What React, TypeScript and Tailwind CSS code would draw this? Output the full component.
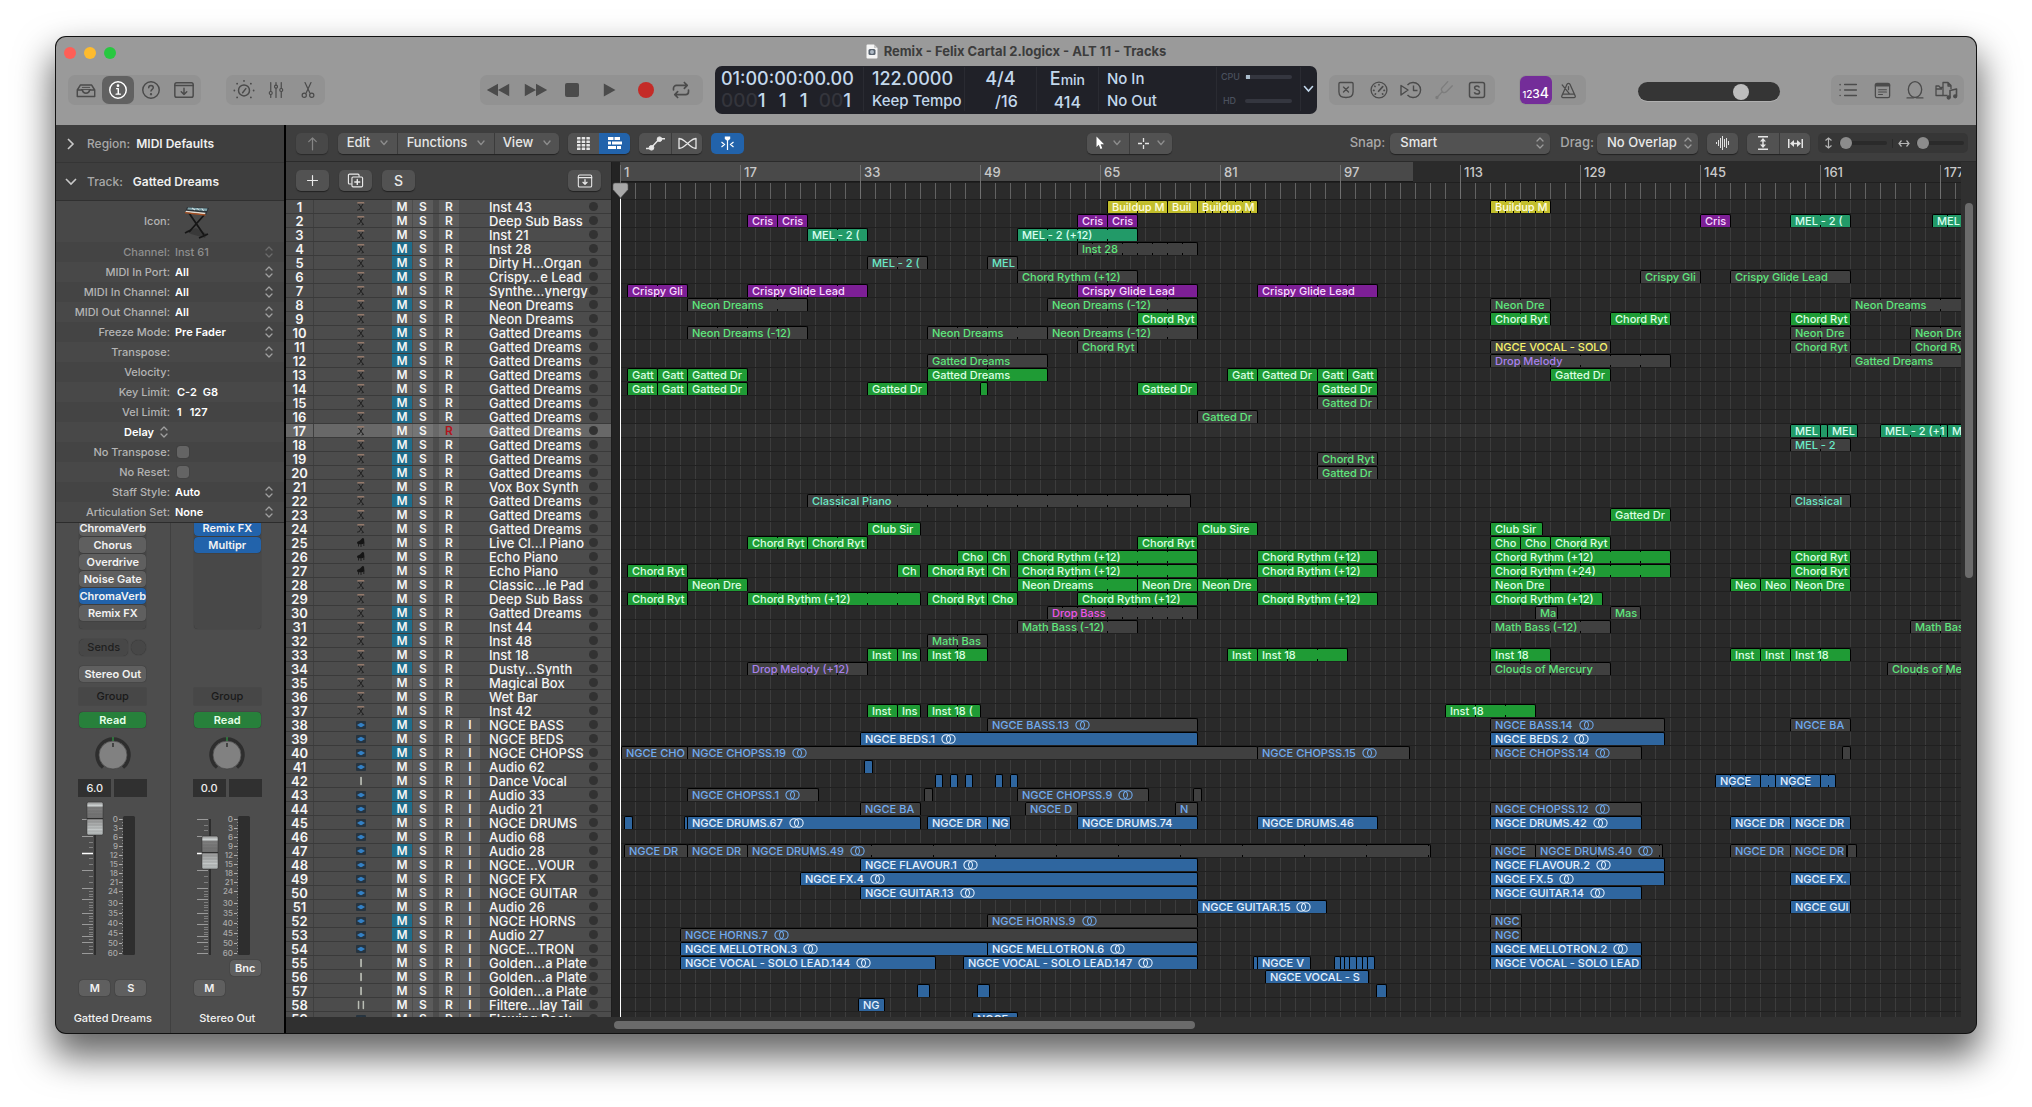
import React from "react";

type Kind = "keys" | "piano" | "wave" | "mic" | "mics";
type Tone = "green" | "purple" | "teal" | "yellow" | "blue" | "mGreen" | "mTeal" | "mPurple" | "mMagenta" | "mYellow" | "mBlue";
// start bar, end bar, label, tone, loop length in bars (0 = none), stereo mark
type Clip = [number, number, string, Tone, number?, boolean?];

const PX_PER_BAR = 7.5;

const TONES: Record<Tone, string> = {
  green: "bg-[#1f9b35] text-[#dcffe2]",
  purple: "bg-[#7d1f96] text-[#f9dcff]",
  teal: "bg-[#229a68] text-[#d9fff0]",
  yellow: "bg-[#c2be2c] text-[#fffde0]",
  blue: "bg-[#2f669f] text-[#e4f1ff]",
  mGreen: "bg-[#404040] text-[#5fe87d]",
  mTeal: "bg-[#404040] text-[#6beac8]",
  mPurple: "bg-[#404040] text-[#a881ee]",
  mMagenta: "bg-[#404040] text-[#ee55e8]",
  mYellow: "bg-[#404040] text-[#f8f36b]",
  mBlue: "bg-[#404040] text-[#70abf0]",
};

const NAMES = [
  "Inst 43", "Deep Sub Bass", "Inst 21", "Inst 28", "Dirty H…Organ", "Crispy…e Lead", "Synthe…ynergy",
  "Neon Dreams", "Neon Dreams", "Gatted Dreams", "Gatted Dreams", "Gatted Dreams", "Gatted Dreams",
  "Gatted Dreams", "Gatted Dreams", "Gatted Dreams", "Gatted Dreams", "Gatted Dreams", "Gatted Dreams",
  "Gatted Dreams", "Vox Box Synth", "Gatted Dreams", "Gatted Dreams", "Gatted Dreams", "Live Cl…l Piano",
  "Echo Piano", "Echo Piano", "Classic…le Pad", "Deep Sub Bass", "Gatted Dreams", "Inst 44", "Inst 48",
  "Inst 18", "Dusty…Synth", "Magical Box", "Wet Bar", "Inst 42", "NGCE BASS", "NGCE BEDS", "NGCE CHOPSS",
  "Audio 62", "Dance Vocal", "Audio 33", "Audio 21", "NGCE DRUMS", "Audio 68", "Audio 28", "NGCE…VOUR",
  "NGCE FX", "NGCE GUITAR", "Audio 26", "NGCE HORNS", "Audio 27", "NGCE…TRON", "Golden…a Plate",
  "Golden…a Plate", "Golden…a Plate", "Filtere…lay Tail", "Flowing Rock",
];
const MUTED = new Set([4, 5, 6, 8, 10, 11, 12, 15, 16, 18, 19, 20, 22, 30, 31, 32, 34, 38, 40, 43, 44, 47, 52, 53]);
const SELECTED = 17;

function kindOf(n: number): Kind {
  if (n >= 25 && n <= 27) return "piano";
  if (n < 38) return "keys";
  if (n === 42 || (n >= 55 && n <= 57)) return "mic";
  if (n === 58) return "mics";
  return "wave";
}

const R12 = "Chord Rythm (+12)";
const CLIPS: Record<number, Clip[]> = {
  1: [[65, 73, "Buildup M", "yellow", 4], [73, 77, "Buil", "yellow"], [77, 85, "Buildup M", "yellow", 1], [116, 124, "Buildup M", "yellow", 1]],
  2: [[17, 21, "Cris", "purple"], [21, 25, "Cris", "purple"], [61, 65, "Cris", "purple"], [65, 69, "Cris", "purple"], [144, 148, "Cris", "purple"], [156, 164, "MEL - 2 (", "teal", 4], [175, 183, "MEL", "teal", 2]],
  3: [[25, 33, "MEL - 2 (", "teal", 4], [53, 69, "MEL - 2 (+12)", "teal", 4]],
  4: [[61, 77, "Inst 28", "mGreen", 2]],
  5: [[33, 41, "MEL - 2 (", "mTeal", 4], [49, 53, "MEL", "mTeal"]],
  6: [[53, 69, R12, "mGreen", 4], [136, 144, "Crispy Gli", "mGreen", 4], [148, 164, "Crispy Glide Lead", "mGreen", 4]],
  7: [[1, 9, "Crispy Gli", "purple", 4], [17, 33, "Crispy Glide Lead", "purple", 4], [61, 77, "Crispy Glide Lead", "purple", 4], [85, 101, "Crispy Glide Lead", "purple", 4]],
  8: [[9, 25, "Neon Dreams", "mGreen", 4], [57, 77, "Neon Dreams (-12)", "mGreen", 4], [116, 124, "Neon Dre", "mGreen", 4], [164, 182, "Neon Dreams", "mGreen", 4]],
  9: [[69, 77, "Chord Ryt", "green", 4], [116, 124, "Chord Ryt", "green", 4], [132, 140, "Chord Ryt", "green", 4], [156, 164, "Chord Ryt", "green", 4]],
  10: [[9, 25, "Neon Dreams (-12)", "mGreen", 4], [41, 57, "Neon Dreams", "mGreen", 4], [57, 77, "Neon Dreams (-12)", "mGreen", 4], [156, 164, "Neon Dre", "mGreen", 4], [172, 182, "Neon Dre", "mGreen", 4]],
  11: [[61, 69, "Chord Ryt", "mGreen", 4], [116, 132, "NGCE VOCAL - SOLO", "mYellow"], [156, 164, "Chord Ryt", "mGreen", 4], [172, 182, "Chord Ryt", "mGreen", 4]],
  12: [[41, 57, "Gatted Dreams", "mGreen", 8], [116, 140, "Drop Melody", "mPurple", 4], [164, 182, "Gatted Dreams", "mGreen", 8]],
  13: [[1, 5, "Gatt", "green"], [5, 9, "Gatt", "green"], [9, 17, "Gatted Dr", "green"], [41, 57, "Gatted Dreams", "green", 8], [81, 85, "Gatt", "green"], [85, 93, "Gatted Dr", "green"], [93, 97, "Gatt", "green"], [97, 101, "Gatt", "green"], [124, 132, "Gatted Dr", "green"]],
  14: [[1, 5, "Gatt", "green"], [5, 9, "Gatt", "green"], [9, 17, "Gatted Dr", "green"], [33, 41, "Gatted Dr", "green"], [48, 49, "", "green"], [69, 77, "Gatted Dr", "green"], [93, 101, "Gatted Dr", "green"]],
  15: [[93, 101, "Gatted Dr", "mGreen"]],
  16: [[77, 85, "Gatted Dr", "mGreen"]],
  17: [[156, 160, "MEL", "teal"], [160, 161, "", "teal"], [161, 165, "MEL", "teal"], [168, 177, "MEL - 2 (+1", "teal", 4], [177, 182, "M", "teal"]],
  18: [[156, 164, "MEL - 2", "mTeal", 4]],
  19: [[93, 101, "Chord Ryt", "mGreen", 4]],
  20: [[93, 101, "Gatted Dr", "mGreen"]],
  22: [[25, 76, "Classical Piano", "mTeal", 4], [156, 164, "Classical", "mTeal", 4]],
  23: [[132, 140, "Gatted Dr", "green"]],
  24: [[33, 40, "Club Sir", "green"], [77, 85, "Club Sire", "green"], [116, 123, "Club Sir", "green"]],
  25: [[17, 25, "Chord Ryt", "green", 4], [25, 33, "Chord Ryt", "green", 4], [69, 77, "Chord Ryt", "green", 4], [116, 120, "Cho", "green"], [120, 124, "Cho", "green"], [124, 132, "Chord Ryt", "green", 4]],
  26: [[45, 49, "Cho", "green"], [49, 52, "Ch", "green"], [53, 77, R12, "green", 4], [85, 101, R12, "green", 4], [116, 140, R12, "green", 4], [156, 164, "Chord Ryt", "green", 4]],
  27: [[1, 9, "Chord Ryt", "green", 4], [37, 40, "Ch", "green"], [41, 49, "Chord Ryt", "green", 4], [49, 52, "Ch", "green"], [53, 77, R12, "green", 4], [85, 101, R12, "green", 4], [116, 140, "Chord Rythm (+24)", "green", 4], [156, 164, "Chord Ryt", "green", 4]],
  28: [[9, 17, "Neon Dre", "green", 4], [53, 69, "Neon Dreams", "green", 4], [69, 77, "Neon Dre", "green", 4], [77, 85, "Neon Dre", "green", 4], [116, 124, "Neon Dre", "green", 4], [148, 152, "Neo", "green"], [152, 156, "Neo", "green"], [156, 164, "Neon Dre", "green", 4]],
  29: [[1, 9, "Chord Ryt", "green", 4], [17, 40, R12, "green", 4], [41, 49, "Chord Ryt", "green", 4], [49, 53, "Cho", "green"], [61, 77, R12, "green", 4], [85, 101, R12, "green", 4], [116, 131, R12, "green", 4]],
  30: [[57, 77, "Drop Bass", "mMagenta", 2], [122, 125, "Ma", "mGreen"], [132, 136, "Mas", "mGreen"]],
  31: [[53, 69, "Math Bass (-12)", "mGreen", 4], [116, 132, "Math Bass (-12)", "mGreen", 4], [172, 182, "Math Bas", "mGreen", 4]],
  32: [[41, 49, "Math Bas", "mGreen", 4]],
  33: [[33, 37, "Inst", "green"], [37, 40, "Ins", "green"], [41, 49, "Inst 18", "green", 4], [81, 85, "Inst", "green"], [85, 97, "Inst 18", "green", 4], [116, 124, "Inst 18", "green", 4], [148, 152, "Inst", "green"], [152, 156, "Inst", "green"], [156, 164, "Inst 18", "green", 4]],
  34: [[17, 33, "Drop Melody (+12)", "mPurple", 4], [116, 132, "Clouds of Mercury", "mGreen", 4], [169, 185, "Clouds of Mercury", "mGreen", 4]],
  37: [[33, 37, "Inst", "green"], [37, 40, "Ins", "green"], [41, 48, "Inst 18 (", "green", 4], [110, 122, "Inst 18", "green", 4]],
  38: [[49, 77, "NGCE BASS.13", "mBlue", 0, true], [116, 139.3, "NGCE BASS.14", "mBlue", 0, true], [156, 164, "NGCE BA", "mBlue"]],
  39: [[32, 77, "NGCE BEDS.1", "blue", 0, true], [116, 139.3, "NGCE BEDS.2", "blue", 0, true]],
  40: [[0.2, 9, "NGCE CHO", "mBlue"], [9, 85, "NGCE CHOPSS.19", "mBlue", 0, true], [85, 105.3, "NGCE CHOPSS.15", "mBlue", 0, true], [116, 136.2, "NGCE CHOPSS.14", "mBlue", 0, true], [163, 164, "", "mBlue"]],
  41: [[32.6, 33.6, "", "blue"]],
  42: [[42, 43, "", "blue"], [44, 45, "", "blue"], [46, 47, "", "blue"], [50, 51, "", "blue"], [52, 53, "", "blue"], [146, 152, "NGCE", "blue", 2], [152, 154, "", "blue", 1], [154, 160, "NGCE", "blue", 2], [160, 162, "", "blue", 1]],
  43: [[9, 26.5, "NGCE CHOPSS.1", "mBlue", 0, true], [40.6, 41.6, "", "mBlue"], [53, 70.5, "NGCE CHOPSS.9", "mBlue", 0, true], [76.5, 77.5, "", "mBlue"]],
  44: [[32, 40, "NGCE BA", "mBlue"], [54, 61, "NGCE D", "mBlue"], [74, 77, "N", "mBlue"], [116, 136.2, "NGCE CHOPSS.12", "mBlue", 0, true]],
  45: [[0.6, 1.6, "", "blue"], [8.6, 9, "", "blue"], [9, 40, "NGCE DRUMS.67", "blue", 0, true], [41, 49, "NGCE DR", "blue"], [49, 52, "NG", "blue"], [61, 77, "NGCE DRUMS.74", "blue"], [85, 101, "NGCE DRUMS.46", "blue"], [116, 136.2, "NGCE DRUMS.42", "blue", 0, true], [148, 156, "NGCE DR", "blue"], [156, 164, "NGCE DR", "blue"]],
  47: [[0.6, 9, "NGCE DR", "mBlue"], [9, 17, "NGCE DR", "mBlue"], [17, 108, "NGCE DRUMS.49", "mBlue", 8.25, true], [116, 122, "NGCE", "mBlue"], [122, 139, "NGCE DRUMS.40", "mBlue", 8.25, true], [148, 156, "NGCE DR", "mBlue"], [156, 163.5, "NGCE DR", "mBlue"], [163.7, 164.8, "", "mBlue"]],
  48: [[32, 77, "NGCE FLAVOUR.1", "blue", 0, true], [116, 139.3, "NGCE FLAVOUR.2", "blue", 0, true]],
  49: [[24, 77, "NGCE FX.4", "blue", 0, true], [116, 139.3, "NGCE FX.5", "blue", 0, true], [156, 164, "NGCE FX.", "blue"]],
  50: [[32, 77, "NGCE GUITAR.13", "blue", 0, true], [116, 136.2, "NGCE GUITAR.14", "blue", 0, true]],
  51: [[77, 94.2, "NGCE GUITAR.15", "blue", 0, true], [156, 164, "NGCE GUI", "blue"]],
  52: [[49, 77, "NGCE HORNS.9", "mBlue", 0, true], [116, 120.2, "NGC", "mBlue"]],
  53: [[8, 77, "NGCE HORNS.7", "mBlue", 0, true], [116, 120.2, "NGC", "mBlue"]],
  54: [[8, 49, "NGCE MELLOTRON.3", "blue", 0, true], [49, 77, "NGCE MELLOTRON.6", "blue", 0, true], [116, 136.2, "NGCE MELLOTRON.2", "blue", 0, true]],
  55: [[8, 42, "NGCE VOCAL - SOLO LEAD.144", "blue", 0, true], [45.8, 77, "NGCE VOCAL - SOLO LEAD.147", "blue", 0, true], [84.4, 85, "", "blue"], [85, 92, "NGCE V", "blue"], [95.3, 96, "", "blue"], [96, 96.6, "", "blue"], [96.6, 97.3, "", "blue"], [97.3, 98.2, "", "blue"], [98.2, 99, "", "blue"], [99, 99.6, "", "blue"], [99.6, 100.6, "", "blue"], [116, 136.2, "NGCE VOCAL - SOLO LEAD", "blue"]],
  56: [[86, 99.8, "NGCE VOCAL - S", "blue"]],
  57: [[39.7, 41.3, "", "blue"], [47.7, 49.3, "", "blue"], [100.8, 102.2, "", "blue"]],
  58: [[31.8, 35.2, "NG", "blue"]],
  59: [[47, 53, "NGCE", "blue"]],
};

/* ---------- small drawings ---------- */

function Icon({ children, size = 22, sw = 1.6, className = "" }: { children: React.ReactNode; size?: number; sw?: number; className?: string }) {
  return (
    <svg width={size} height={size} viewBox="0 0 24 24" fill="none" stroke="currentColor" strokeWidth={sw} strokeLinecap="round" strokeLinejoin="round" className={className} aria-hidden="true">
      {children}
    </svg>
  );
}

function Steppers({ className = "" }: { className?: string }) {
  return (
    <svg width="8" height="12" viewBox="0 0 8 12" fill="none" stroke="currentColor" strokeWidth="1.3" strokeLinecap="round" strokeLinejoin="round" className={className} aria-hidden="true">
      <path d="M1 4 4 1l3 3M1 8l3 3 3-3" />
    </svg>
  );
}

function Chevron({ className = "" }: { className?: string }) {
  return (
    <svg width="8" height="6" viewBox="0 0 8 6" fill="none" stroke="currentColor" strokeWidth="1.4" strokeLinecap="round" strokeLinejoin="round" className={className} aria-hidden="true">
      <path d="M1 1l3 3.6L7 1" />
    </svg>
  );
}

function StereoMark() {
  return (
    <svg width="15" height="10" viewBox="0 0 15 10" fill="none" stroke="currentColor" strokeWidth="1.1" className="shrink-0" aria-hidden="true">
      <circle cx="5.2" cy="5" r="4.3" />
      <circle cx="9.8" cy="5" r="4.3" />
    </svg>
  );
}

function TrackIcon({ kind }: { kind: Kind }) {
  if (kind === "keys")
    return (
      <svg width="10" height="11" viewBox="0 0 10 11" aria-hidden="true">
        <path d="M1.500 1h6.500l.6 1.600h-7.500z" fill="#94796a" />
        <path d="M2.500 3l4.500 6M7 3L3 9" stroke="#1f1f1f" strokeWidth="1" />
        <path d="M1 9.200l2.500-.6M5.500 10l2.500-.8" stroke="#262626" strokeWidth="1" />
      </svg>
    );
  if (kind === "piano")
    return (
      <svg width="10" height="11" viewBox="0 0 10 11" aria-hidden="true">
        <path d="M1 5l3-1.500L6.500 1 8 1.500 8.500 6.500 5 7.500 1.500 7z" fill="#151515" />
        <path d="M2.500 7v2.500M5 7.500V10M7.800 6.500V9" stroke="#1a1a1a" strokeWidth="0.900" />
      </svg>
    );
  if (kind === "wave")
    return (
      <svg width="10" height="8" viewBox="0 0 10 8" aria-hidden="true">
        <rect width="10" height="8" rx="1" fill="#27343f" />
        <path d="M1 4L3 2.800 5 1.800 7 2.800 9 4 7 5.200 5 6.200 3 5.200z" fill="#3480c4" />
      </svg>
    );
  return (
    <svg width="10" height="10" viewBox="0 0 10 10" aria-hidden="true">
      {kind === "mic" ? (
        <rect x="4.200" y="0.800" width="1.700" height="8.400" rx="0.800" fill="#b9bdb4" />
      ) : (
        <>
          <rect x="1.800" y="0.800" width="1.500" height="8.400" rx="0.700" fill="#b9bdb4" />
          <rect x="6.600" y="0.800" width="1.500" height="8.400" rx="0.700" fill="#b9bdb4" />
        </>
      )}
    </svg>
  );
}

/* ---------- toolbar ---------- */

function ToolGroup({ children }: { children: React.ReactNode }) {
  return <div className="flex h-[30px] items-center rounded-[7px] bg-[#929292] px-px">{children}</div>;
}

function Tool({ label, w = "w-[33px]", tone = "text-[#4b4b4b]", children }: { label: string; w?: string; tone?: string; children: React.ReactNode }) {
  return (
    <button type="button" aria-label={label} className={`flex h-7 shrink-0 items-center justify-center rounded-[7px] ${w} ${tone}`}>
      {children}
    </button>
  );
}

function Lcd() {
  const dim = "text-[#34353c]";
  return (
    <div className="flex h-12 w-[602px] shrink-0 rounded-[7px] bg-[#202128] pt-px pb-[3px] font-medium text-[#c3d8ec]">
      <div className="flex w-[148px] flex-col pl-1.5 whitespace-nowrap">
        <div className="text-[18px] leading-[23px]">01:00:00:00.00</div>
        <div className="flex text-[19px] leading-[22px]">
          <span className={dim}>000</span><span className="w-[21px]">1</span><span className="w-[21px]">1</span><span className="w-[19px]">1</span><span className={dim}>00</span><span>1</span>
        </div>
      </div>
      <div className="w-[101px] border-l border-[#2a2b32] pl-2 whitespace-nowrap">
        <div className="text-[18px] leading-[23px]">122.0000</div>
        <div className="text-[15px] leading-[22px]">Keep Tempo</div>
      </div>
      <div className="w-[72px] border-l border-[#2a2b32] text-center">
        <div className="text-[18px] leading-[23px]">4/4</div>
        <div className="pl-3 text-[16px] leading-[22px]">/16</div>
      </div>
      <div className="w-[62px] border-l border-[#2a2b32] text-center">
        <div className="text-[18px] leading-[23px]">E<span className="text-[14px]">min</span></div>
        <div className="text-[16px] leading-[22px]">414</div>
      </div>
      <div className="w-[118px] border-l border-[#2a2b32] pl-2 text-[15px]">
        <div className="leading-[23px]">No In</div>
        <div className="leading-[22px]">No Out</div>
      </div>
      <div className="flex w-[84px] flex-col gap-2 border-l border-[#2a2b32] pt-0.5 pl-1 text-[9px] text-[#4b515e]">
        <div className="flex h-4 items-center">
          <span className="w-6">CPU</span>
          <span className="flex h-1 w-[47px] rounded-full bg-[#34363f] pl-px"><span className="w-1 bg-[#a9bccc]" /></span>
        </div>
        <div className="flex h-4 items-center">
          <span className="w-[21px] pl-0.5">HD</span>
          <span className="ml-[3px] h-1 w-[47px] rounded-full bg-[#34363f]" />
        </div>
      </div>
      <button type="button" aria-label="Display mode" className="flex flex-1 items-center justify-center border-l border-[#2a2b32]">
        <svg width="11" height="8" viewBox="0 0 11 8" fill="none" stroke="currentColor" strokeWidth="1.600" strokeLinecap="round"><path d="M1.500 1.500l4 4.500 4-4.500" /></svg>
      </button>
    </div>
  );
}

function Toolbar() {
  return (
    <header className="bg-[#9a9a9a]">
      <div className="grid h-[29px] grid-cols-[1fr_auto_1fr] items-center">
        <div className="flex gap-2 pt-0.5 pl-2">
          <button type="button" aria-label="Close" className="size-3 rounded-full bg-[#fe5f57]" />
          <button type="button" aria-label="Minimize" className="size-3 rounded-full bg-[#febb2e]" />
          <button type="button" aria-label="Zoom" className="size-3 rounded-full bg-[#28c840]" />
        </div>
        <h1 className="flex items-center gap-1.5 text-[13px] font-bold text-[#3c3c3c]">
          <svg width="12" height="15" viewBox="0 0 12 15" aria-hidden="true">
            <path d="M0.500 1.500a1 1 0 011-1H8l3.500 3.500v9.500a1 1 0 01-1 1h-9a1 1 0 01-1-1z" fill="#f5f5f5" />
            <path d="M8 0.500V4h3.500z" fill="#c9c9c9" />
            <rect x="2.500" y="5" width="7" height="6" rx="1.500" fill="#59636f" />
            <circle cx="6" cy="8" r="2" fill="#aeb9c4" />
          </svg>
          Remix - Felix Cartal 2.logicx - ALT 11 - Tracks
        </h1>
      </div>
      <div className="flex h-[59px] items-start">
        <div className="mt-[9px] ml-3"><ToolGroup>
          <Tool label="Library">
            <Icon><path d="M2.500 12l3.500-5.500h12L21.500 12v7h-19zM2.500 12H8c.5 2.500 2 3.500 4 3.500s3.500-1 4-3.500h5.500" /><path d="M8 9.200h8M7 11.500h10" strokeWidth="1" /></Icon>
          </Tool>
          <Tool label="Inspector" w="w-8" tone="bg-[#616161] text-white">
            <Icon><circle cx="12" cy="12" r="9" /><path d="M10.500 10.500H12.300V16.500M10 16.500h4.500" /><circle cx="12" cy="7.300" r="0.700" fill="currentColor" /></Icon>
          </Tool>
          <Tool label="Quick Help">
            <Icon><circle cx="12" cy="12" r="9" /><path d="M9.500 9.500a2.500 2.500 0 115 0c0 1.700-2.500 1.900-2.500 3.700" /><circle cx="12" cy="16.500" r="0.500" fill="currentColor" /></Icon>
          </Tool>
          <Tool label="Toolbar">
            <Icon><rect x="2" y="4" width="20" height="16" rx="2" /><path d="M2 7h20M12 10v7M9 14l3 3 3-3" /></Icon>
          </Tool>
        </ToolGroup></div>
        <div className="mt-[9px] ml-[25px]"><ToolGroup>
          <Tool label="Smart Controls">
            <Icon size={22}><circle cx="12" cy="12.500" r="6" /><path d="M10.500 15l3.500-4.500" /><path d="M12 2v.1M4.500 5v.1M19.500 5v.1M1.500 12.500v.1M22.500 12.500v.1M4.500 20v.1M19.500 20v.1" strokeWidth="2" /></Icon>
          </Tool>
          <Tool label="Mixer" w="w-[31px]">
            <Icon size={18}><path d="M5 2v12M5 18v4M12 2v3.500M12 9.500V22M19 2v8M19 14v8" /><circle cx="5" cy="16" r="2" /><circle cx="12" cy="7.500" r="2" /><circle cx="19" cy="12" r="2" /></Icon>
          </Tool>
          <Tool label="Editors">
            <Icon size={18}><path d="M8 2l6.500 14M16 2L9.500 16" /><circle cx="7" cy="19" r="2.800" /><circle cx="17" cy="19" r="2.800" /></Icon>
          </Tool>
        </ToolGroup></div>
        <div className="flex-[156]" />
        <div className="mt-[9px]"><ToolGroup>
          <Tool label="Rewind" w="w-[34px]"><svg width="24" height="14" viewBox="0 0 24 14" fill="currentColor"><path d="M12 .8v12.400L.8 7zM23.200.8v12.400L12 7z" /></svg></Tool>
          <Tool label="Forward" w="w-[43px]"><svg width="24" height="14" viewBox="0 0 24 14" fill="currentColor"><path d="M12 .8v12.400L23.200 7zM.8.8v12.400L12 7z" /></svg></Tool>
          <Tool label="Stop" w="w-[29px]"><span className="size-3.5 rounded-[2px] bg-current" /></Tool>
          <Tool label="Play" w="w-[46px]"><svg width="13" height="14" viewBox="0 0 13 14" fill="currentColor"><path d="M.8.500v13L12.500 7z" /></svg></Tool>
          <Tool label="Record" w="w-[27px]" tone="text-[#c42b27]"><span className="size-4 rounded-full bg-current" /></Tool>
          <Tool label="Cycle" w="w-[42px]">
            <Icon size={20} sw={2}><path d="M3 12V10a3.500 3.500 0 013.500-3.500H19M16 3l3.500 3.500L16 10M21 12v2a3.500 3.500 0 01-3.500 3.500H5M8 14l-3.500 3.500L8 21" /></Icon>
          </Tool>
        </ToolGroup></div>
        <div className="ml-3"><Lcd /></div>
        <div className="mt-[9px] ml-3"><ToolGroup>
          <Tool label="Replace"><Icon size={20}><path d="M3.500 4.500a1.500 1.500 0 011.500-1.500h14a1.500 1.500 0 011.500 1.500V14c0 4-3 7-8.500 7s-8.500-3-8.500-7zM9 8.500l6 6M15 8.500l-6 6" /></Icon></Tool>
          <Tool label="Low Latency"><Icon size={20}><circle cx="12" cy="12" r="9.500" /><path d="M11.500 13.500L16.500 8" strokeWidth="2" /><path d="M12 5.500v.5M7 7.500l.3.300M5.500 12.500h.5M18 12.500h.5M7.500 17l.3-.3M16.500 17l-.3-.3" strokeWidth="2" /></Icon></Tool>
          <Tool label="Pre Fader Metering" w="w-[31px]"><svg width="22" height="18" viewBox="0 0 22 18" fill="none" stroke="currentColor" strokeWidth="1.400" strokeLinejoin="round"><path d="M1 4.500l7 4.500-7 5z" /><path d="M7.500 4A7.500 7.500 0 1 1 7.500 14" /><path d="M13.500 4.500V9.500h4" /></svg></Tool>
          <Tool label="Tuner" w="w-[34px]" tone="text-[#7d7d7d]"><Icon size={20}><circle cx="3.500" cy="21" r="1.200" fill="currentColor" /><path d="M3.500 21l6.500-7M10 14c-1.700-1.700-1-4 .5-5.500L16.500 2M10 14c1.700 1.700 4 1 5.500-.5L22 7" /></Icon></Tool>
          <Tool label="Solo"><svg width="18" height="18" viewBox="0 0 18 18" fill="none" stroke="currentColor" strokeWidth="1.500"><rect x="1.500" y="1.500" width="15" height="15" rx="2" /><path d="M11.400 6.500C11 5.500 10.200 5 9 5 7.600 5 6.600 5.800 6.600 6.900c0 2.600 5 1.400 5 4 0 1.200-1 2.100-2.600 2.100-1.400 0-2.400-.6-2.700-1.700" /></svg></Tool>
        </ToolGroup></div>
        <div className="flex-[24]" />
        <div className="mt-[9px]"><ToolGroup>
          <button type="button" aria-label="Count-in" className="flex h-7 w-8 items-baseline justify-center rounded-[6px] bg-[#742d99] pt-1.5 font-medium text-white">
            <span className="text-[9px]">1</span><span className="text-[10px]">2</span><span className="text-[12px]">3</span><span className="text-[14px]">4</span>
          </button>
          <Tool label="Metronome" w="w-[33px]"><Icon size={19}><path d="M10 4.500c.3-2 3.700-2 4 0L20.500 19a1.500 1.500 0 01-1.500 2H5a1.500 1.500 0 01-1.500-2zM5.500 16.500h13M13 16L4 5M12 7v4" /></Icon></Tool>
        </ToolGroup></div>
        <div className="flex-[53]" />
        <input type="range" aria-label="Master volume" defaultValue={75} className="mt-4 h-[19px] w-[142px] shrink-0 appearance-none rounded-full bg-[#353535] shadow-[0_1px_0_#b0b0b0] [&::-webkit-slider-thumb]:size-4 [&::-webkit-slider-thumb]:appearance-none [&::-webkit-slider-thumb]:rounded-full [&::-webkit-slider-thumb]:bg-[#bdbdbd]" />
        <div className="flex-[51]" />
        <div className="mt-[9px] mr-3"><ToolGroup>
          <Tool label="List Editors" w="w-8"><Icon size={20}><path d="M8 5.500h14M8 12h14M8 18.500h14M2.500 5.500v.1M2.500 12v.1M2.500 18.500v.1" strokeWidth="1.800" /></Icon></Tool>
          <Tool label="Note Pad" w="w-9"><Icon size={19}><rect x="3" y="3" width="18" height="18" rx="2" /><path d="M3 6h18M3 4.500h18" /><path d="M7 11h10M7 14h10M7 17h5" strokeWidth="1.300" /></Icon></Tool>
          <Tool label="Loop Browser" w="w-[30px]"><Icon size={20}><ellipse cx="12" cy="11.500" rx="8" ry="9.500" /><path d="M2.500 21.500h7.500M14 21.500h7.500" /></Icon></Tool>
          <Tool label="Browsers" w="w-[33px]"><svg width="23" height="19" viewBox="0 0 23 19" fill="none" stroke="currentColor" strokeWidth="1.300" strokeLinejoin="round"><path d="M8 14.500H1V5h3l1 1.500h3M1 8h6" /><path d="M12.500 14.500H8V1.500h5l3 3V8M13 1.500V5h3" /><path d="M15 16.500V9.500l6.500-1.500v7" strokeWidth="1.600" /><circle cx="13.700" cy="16.500" r="1.500" fill="currentColor" /><circle cx="20.200" cy="15.300" r="1.500" fill="currentColor" /></svg></Tool>
        </ToolGroup></div>
      </div>
    </header>
  );
}

/* ---------- inspector ---------- */

function SelectField({ id, label, value, dim }: { id: string; label: string; value: string; dim?: boolean }) {
  return (
    <div className={`relative flex h-5 items-center odd:bg-[#444444] even:bg-[#484848] ${dim ? "text-[#8f8f8f]" : "text-white"}`}>
      <label htmlFor={id} className={`w-[114px] shrink-0 text-right ${dim ? "text-[#8f8f8f]" : "text-[#b4b4b4]"}`}>{label}</label>
      <select id={id} defaultValue={value} className={`ml-[5px] min-w-0 flex-1 appearance-none bg-transparent pr-5 outline-none ${dim ? "font-medium" : "font-semibold"}`}>
        <option>{value}</option>
      </select>
      <Steppers className={`pointer-events-none absolute right-[11px] ${dim ? "text-[#6c6c6c]" : "text-[#a0a0a0]"}`} />
    </div>
  );
}

function ValueField({ label, children }: { label: string; children?: React.ReactNode }) {
  return (
    <div className="flex h-5 items-center odd:bg-[#444444] even:bg-[#484848]">
      <span className="w-[114px] shrink-0 text-right text-[#b4b4b4]">{label}</span>
      <span className="ml-[7px] flex gap-1.5 font-semibold text-white">{children}</span>
    </div>
  );
}

function CheckField({ id, label }: { id: string; label: string }) {
  return (
    <div className="flex h-5 items-center odd:bg-[#444444] even:bg-[#484848]">
      <label htmlFor={id} className="w-[114px] shrink-0 text-right text-[#b4b4b4]">{label}</label>
      <input id={id} type="checkbox" className="ml-[7px] size-3 appearance-none rounded-[3px] bg-[#646464] shadow-[0_0_1px_#222]" />
    </div>
  );
}

function Slot({ children, on, className = "" }: { children: React.ReactNode; on?: boolean; className?: string }) {
  return (
    <button type="button" className={`block h-4 w-full shrink-0 rounded-[4px] text-center text-[11px] leading-4 font-semibold whitespace-nowrap text-[#f2f2f2] shadow-[0_0_1px_#1d1d1d] ${on ? "bg-[#2263ab]" : "bg-[#5f5f5f]"} ${className}`}>
      {children}
    </button>
  );
}

const METER: [number, string][] = [[18, "0"], [27, "3"], [36, "6"], [45, "9"], [54, "12"], [63, "15"], [72, "18"], [81, "21"], [90, "24"], [102, "30"], [112, "35"], [122, "40"], [132, "45"], [142, "50"], [152, "60"]];
const MAJOR = [18, 35, 69, 87, 98, 112, 123, 135, 141, 152];
const MINOR = [24, 29, 41, 46, 57, 63, 75, 81, 90, 93, 95, 101, 104, 106, 109, 115, 117, 120, 126, 128, 131, 133, 138, 145, 148];

function Fader({ label, top }: { label: string; top: number }) {
  return (
    <div className="relative h-[158px] w-[67px]">
      <svg width="67" height="158" viewBox="0 0 67 158" aria-hidden="true">
        {MINOR.map((y) => <path key={y} d={`M10 ${y + 0.5}h4`} stroke="#7f7f7f" strokeWidth="1" />)}
        {MAJOR.map((y) => <path key={y} d={`M3 ${y + 0.5}h11`} stroke="#9a9a9a" strokeWidth="1" />)}
        <path d="M3 52.500h11" stroke="#fff" strokeWidth="1.500" />
        <rect x="15" y="18" width="2" height="136" fill="#2e2e2e" />
        <rect x="44" y="15" width="12" height="139" rx="1.500" fill="#2e2e2e" />
        <path d="M43.500 18v135" stroke="#8e8e8e" strokeWidth="1" strokeDasharray="1 2" />
        {METER.map(([y, t]) => (
          <g key={y}>
            <path d={`M40 ${y + 0.5}h3`} stroke="#b0b0b0" strokeWidth="1" />
            <text x="39" y={y + 3} textAnchor="end" fontSize="8" fill="#a8a8a8">{t}</text>
          </g>
        ))}
        <defs>
          <linearGradient id="cap" x1="0" y1="0" x2="0" y2="1">
            <stop offset="0" stopColor="#8d8d8d" /><stop offset="0.120" stopColor="#d3d8d8" /><stop offset="0.150" stopColor="#808080" />
            <stop offset="0.480" stopColor="#6e6e6e" /><stop offset="0.500" stopColor="#2f2f2f" /><stop offset="0.540" stopColor="#9a9a9a" />
            <stop offset="0.850" stopColor="#c4c9c9" /><stop offset="1" stopColor="#a5a9a9" />
          </linearGradient>
        </defs>
        <rect x="8" y={top} width="16" height="33" rx="1.500" fill="url(#cap)" stroke="#2c2c2c" strokeWidth="0.500" />
        {[6, 9, 12, 20, 23, 26, 29].map((d) => <path key={d} d={`M8.500 ${top + d}h15`} stroke="#555" strokeOpacity="0.400" strokeWidth="0.700" />)}
      </svg>
      <input type="range" aria-label={`${label} volume`} className="absolute top-0 left-0 h-full w-7 opacity-0 [writing-mode:vertical-lr]" />
    </div>
  );
}

function Strip({ name, inserts, gain, top, track }: { name: string; inserts: [string, boolean][]; gain: string; top: number; track?: boolean }) {
  return (
    <section aria-label={name} className="flex flex-1 flex-col items-center border-r border-[#404040] last:border-r-0">
      <div className="flex h-[106px] w-[67px] flex-col gap-px overflow-hidden rounded-b-[4px] bg-[#484848] shadow-[0_0_1px_#2a2a2a]">
        {inserts.map(([t, on], i) => <Slot key={i} on={on} className={i === 0 ? "-mt-[3px]" : ""}>{t}</Slot>)}
      </div>
      <div className="mt-2.5 flex h-[17px] w-[67px] items-center justify-between text-[11px] font-medium text-[#1f1f1f]">
        {track && (
          <>
            <button type="button" className="h-[17px] w-[49px] rounded-[5px] bg-[#474747] leading-[17px] shadow-[0_0_1px_#2a2a2a]">Sends</button>
            <button type="button" aria-label="Send level" className="size-[15px] rounded-full bg-[#474747] shadow-[0_0_1px_#2a2a2a]" />
          </>
        )}
      </div>
      <div className="mt-2.5 h-4 w-[67px]">{track && <Slot>Stereo Out</Slot>}</div>
      <button type="button" className="mt-1.5 h-[17px] w-[67px] bg-[#474747] text-[11px] leading-[17px] font-medium text-[#1a1a1a] shadow-[0_0_1px_#333]">Group</button>
      <button type="button" className="mt-[7px] h-4 w-[67px] rounded-[4px] bg-[#27803b] text-[11px] leading-4 font-semibold text-[#e4ffe8] shadow-[0_0_1px_#1d1d1d]">Read</button>
      <svg width="38" height="38" viewBox="0 0 38 38" className="mt-2" aria-hidden="true">
        <path d="M9 31.500A16 16 0 1 1 29 31.500" fill="none" stroke="#2e2e2e" strokeWidth="3.500" />
        <circle cx="19" cy="19" r="14" fill="#818181" stroke="#3c3c3c" strokeWidth="0.600" />
        <path d="M19 1v4" stroke="#2fae46" strokeWidth="1" />
        <path d="M19 7v4" stroke="#1c1c1c" strokeWidth="1.200" />
      </svg>
      <div className="mt-[5px] flex w-[69px] gap-[3px]">
        <div className="h-[18px] flex-1 bg-[#303030] text-center text-[11px] leading-[18px] font-medium text-[#eeeeee]">{gain}</div>
        <div className="h-[18px] flex-1 bg-[#303030]" />
      </div>
      <div className="mt-1"><Fader label={name} top={top} /></div>
      <div className="mt-px flex h-4 w-[67px] justify-end">{!track && <div className="w-[31px]"><Slot>Bnc</Slot></div>}</div>
      <div className="mt-1 flex w-[67px] gap-[5px]">
        <div className="w-[31px]"><Slot>M</Slot></div>
        {track && <div className="w-[31px]"><Slot>S</Slot></div>}
      </div>
      <div className="mt-3.5 text-[11px] leading-4 font-medium whitespace-nowrap text-[#f2f2f2]">{name}</div>
    </section>
  );
}

function Inspector() {
  return (
    <aside className="flex w-[228px] shrink-0 flex-col bg-[#4d4d4d] text-[11px] font-medium">
      <button type="button" className="flex h-[38px] shrink-0 items-center border-b border-[#353535] bg-[#3e3e3e] pl-2.5 text-[12px] text-[#a8a8a8]">
        <svg width="9" height="12" viewBox="0 0 9 12" fill="none" stroke="#c8c8c8" strokeWidth="1.600" className="mr-3"><path d="M2 1l5 5-5 5" /></svg>
        Region: <span className="ml-1.5 font-semibold text-[#efefef]">MIDI Defaults</span>
      </button>
      <button type="button" className="flex h-[38px] shrink-0 items-center border-b border-[#303030] bg-[#3e3e3e] pl-[9px] text-[12px] text-[#a8a8a8]">
        <svg width="12" height="9" viewBox="0 0 12 9" fill="none" stroke="#c8c8c8" strokeWidth="1.600" className="mr-2.5"><path d="M1 2l5 5 5-5" /></svg>
        Track: <span className="ml-2.5 font-semibold text-[#efefef]">Gatted Dreams</span>
      </button>
      <div className="flex h-[41px] shrink-0 items-center bg-[#484848]">
        <span className="w-[114px] text-right text-[#b4b4b4]">Icon:</span>
        <svg width="32" height="36" viewBox="0 0 32 36" className="ml-2.5" aria-hidden="true">
          <path d="M6 27l10-3 11 6-2 4-14-4z" fill="#333" opacity="0.700" />
          <path d="M9 9l15 22M25 10L9 28" stroke="#161616" strokeWidth="1.800" />
          <path d="M5 29l6-3M19 34l9-4" stroke="#161616" strokeWidth="1.800" />
          <path d="M7 3l22 1-3 7L5 8z" fill="#2c3338" />
          <path d="M8 3.500l19.500 1-.8 2.500L7.300 5.500z" fill="#7fa3ab" />
          <path d="M12 4l3 2M17 4.300l2 2M22 4.500l1.500 2.500" stroke="#dfe8ea" strokeWidth="1" />
          <path d="M6 6.800l19.500 2L25 10.500 5.300 8.200z" fill="#e3dcd2" />
          <path d="M5 8.600l20.500 2.400" stroke="#a34e22" strokeWidth="1.400" />
        </svg>
      </div>
      <div className="shrink-0 border-b border-[#2c2c2c]">
        <SelectField id="channel" label="Channel:" value="Inst 61" dim />
        <SelectField id="in-port" label="MIDI In Port:" value="All" />
        <SelectField id="in-channel" label="MIDI In Channel:" value="All" />
        <SelectField id="out-channel" label="MIDI Out Channel:" value="All" />
        <SelectField id="freeze" label="Freeze Mode:" value="Pre Fader" />
        <SelectField id="transpose" label="Transpose:" value="" />
        <ValueField label="Velocity:" />
        <ValueField label="Key Limit:"><span>C-2</span><span>G8</span></ValueField>
        <ValueField label="Vel Limit:"><span>1</span><span className="ml-0.5">127</span></ValueField>
        <div className="flex h-5 items-center even:bg-[#484848]">
          <button type="button" className="flex w-[112px] items-center justify-end gap-1.5 font-semibold text-white">Delay <Steppers className="text-[#a0a0a0]" /></button>
        </div>
        <CheckField id="no-transpose" label="No Transpose:" />
        <CheckField id="no-reset" label="No Reset:" />
        <SelectField id="staff" label="Staff Style:" value="Auto" />
        <SelectField id="articulation" label="Articulation Set:" value="None" />
      </div>
      <div className="flex min-h-0 flex-1">
        <Strip track name="Gatted Dreams" gain="6.0" top={1} inserts={[["ChromaVerb", false], ["Chorus", false], ["Overdrive", false], ["Noise Gate", false], ["ChromaVerb", true], ["Remix FX", false]]} />
        <Strip name="Stereo Out" gain="0.0" top={35} inserts={[["Remix FX", true], ["Multipr", true]]} />
      </div>
    </aside>
  );
}

/* ---------- tracks area ---------- */

const SEG = "flex h-[21px] items-center justify-center bg-[#525252] text-[#e6e6e6]";
const GROUP = "flex shrink-0 overflow-hidden rounded-[5px] shadow-[0_1px_1px_#222]";

function MenuBar() {
  return (
    <div className="flex h-[37px] shrink-0 items-center border-b border-[#2b2b2b] bg-[#3e3e3e] pr-2 pl-2.5 text-[13px] font-medium text-[#e9e9e9]">
      <button type="button" aria-label="Up" className="flex h-[21px] w-8 shrink-0 items-center justify-center rounded-[5px] bg-[#484848] text-[#858585] shadow-[0_1px_1px_#2a2a2a]">
        <Icon size={15} sw={2}><path d="M12 22V3M6 9l6-6 6 6" /></Icon>
      </button>
      <div className={`ml-2.5 ${GROUP}`}>
        <button type="button" className={`${SEG} w-[59px] gap-2.5`}>Edit <Chevron className="text-[#8d8d8d]" /></button>
        <button type="button" className={`${SEG} w-[97px] gap-2.5 border-l border-[#3b3b3b]`}>Functions <Chevron className="text-[#8d8d8d]" /></button>
        <button type="button" className={`${SEG} w-[65px] gap-2.5 border-l border-[#3b3b3b]`}>View <Chevron className="text-[#8d8d8d]" /></button>
      </div>
      <div className={`ml-[9px] ${GROUP}`}>
        <button type="button" aria-label="Live Loops" className={`${SEG} w-[31px]`}>
          <svg width="13" height="13" viewBox="0 0 13 13" fill="currentColor">{[0, 4.7, 9.4].map((x) => [0, 3.5, 7, 10.5].map((y) => <rect key={`${x}-${y}`} x={x} y={y} width="3.500" height="2.500" rx="0.500" />))}</svg>
        </button>
        <button type="button" aria-label="Tracks view" className="flex h-[21px] w-[31px] items-center justify-center bg-[#2263ab] text-white">
          <svg width="14" height="12" viewBox="0 0 14 12" fill="currentColor"><path d="M0 0h5.500v3H0zM6.500 0H12v3H6.500zM0 4.500h3v3H0zM4 4.500h10v3H4zM0 9h8v3H0zM9 9h4v3H9z" /></svg>
        </button>
      </div>
      <div className={`ml-[9px] ${GROUP}`}>
        <button type="button" aria-label="Automation" className={`${SEG} w-8`}>
          <svg width="19" height="15" viewBox="0 0 19 15" fill="currentColor" stroke="currentColor"><path d="M0 12.500h4.500L13.500 2.800H19" fill="none" strokeWidth="1.400" /><circle cx="5.500" cy="11.800" r="2.300" /><circle cx="13.500" cy="3.200" r="2.300" /></svg>
        </button>
        <button type="button" aria-label="Flex" className={`${SEG} w-[31px] border-l border-[#3b3b3b]`}>
          <svg width="19" height="13" viewBox="0 0 19 13" fill="none" stroke="currentColor" strokeWidth="1.300" strokeLinejoin="round"><path d="M1 1.500v10c4 0 5-2.500 8.500-5 3.500-2.500 4.500-5 8.500-5v10c-4 0-5-2.500-8.500-5C6 4 5 1.500 1 1.500z" /></svg>
        </button>
      </div>
      <button type="button" aria-label="Catch Playhead" className="ml-[9px] flex h-[21px] w-[33px] shrink-0 items-center justify-center rounded-[5px] bg-[#2263ab] text-white">
        <svg width="15" height="14" viewBox="0 0 15 14" fill="none" stroke="currentColor" strokeWidth="1.200"><path d="M4.800.500h5.400V3L7.500 5 4.800 3z" fill="currentColor" stroke="none" /><path d="M7.500 4v10M1.500 6L4.500 8.500l-3 2.500M13.500 6l-3 2.500 3 2.500" /></svg>
      </button>
      <div className="flex-[343]" />
      <div className={GROUP}>
        <button type="button" aria-label="Left-click tool" className={`${SEG} w-[42px] gap-2`}>
          <svg width="9" height="14" viewBox="0 0 9 14" fill="#fff"><path d="M.500.500v10.500l2.300-2.200L4.500 13l1.800-.8-1.700-3.900 3.400-.1z" /></svg>
          <Chevron className="text-[#8d8d8d]" />
        </button>
        <button type="button" aria-label="Command-click tool" className={`${SEG} w-[43px] gap-2 border-l border-[#3b3b3b]`}>
          <svg width="11" height="11" viewBox="0 0 11 11" stroke="currentColor" strokeWidth="1.300"><path d="M5.500 0v4M5.500 7v4M0 5.500h4M7 5.500h4" /></svg>
          <Chevron className="text-[#8d8d8d]" />
        </button>
      </div>
      <div className="flex-[177]" />
      <label htmlFor="snap" className="text-[#a9a9a9]">Snap:</label>
      <div className="relative ml-[5px] flex shrink-0 items-center">
        <select id="snap" defaultValue="Smart" className="h-[21px] w-40 appearance-none rounded-[5px] bg-[#525252] pl-2.5 shadow-[0_1px_1px_#222] outline-none"><option>Smart</option></select>
        <Steppers className="pointer-events-none absolute right-1.5 text-[#9b9b9b]" />
      </div>
      <label htmlFor="drag" className="ml-2.5 text-[#a9a9a9]">Drag:</label>
      <div className="relative ml-[3px] flex shrink-0 items-center">
        <select id="drag" defaultValue="No Overlap" className="h-[21px] w-[101px] appearance-none rounded-[5px] bg-[#525252] pl-2.5 shadow-[0_1px_1px_#222] outline-none"><option>No Overlap</option></select>
        <Steppers className="pointer-events-none absolute right-1.5 text-[#9b9b9b]" />
      </div>
      <button type="button" aria-label="Waveform zoom" className="ml-[9px] flex h-[21px] w-[31px] shrink-0 items-center justify-center rounded-[5px] bg-[#525252] text-[#e0e0e0] shadow-[0_1px_1px_#222]">
        <svg width="13" height="14" viewBox="0 0 13 14" stroke="currentColor" strokeWidth="1"><path d="M0.500 6v2M2.500 4v6M4.500 2v10M6.500 0v14M8.500 3v8M10.500 2v10M12.500 5v4" /></svg>
      </button>
      <div className={`ml-[9px] ${GROUP}`}>
        <button type="button" aria-label="Fit vertically" className={`${SEG} w-8`}>
          <svg width="10" height="14" viewBox="0 0 10 14" fill="currentColor"><path d="M0 0h10v1.500H0zM0 12.500h10V14H0zM5 2l3 3.500H5.700v3H8L5 12 2 8.500h2.300v-3H2z" /></svg>
        </button>
        <button type="button" aria-label="Fit horizontally" className={`${SEG} w-[31px] border-l border-[#3b3b3b]`}>
          <svg width="15" height="9" viewBox="0 0 15 9" fill="currentColor"><path d="M0 0h1.500v9H0zM13.500 0H15v9h-1.500zM2 4.500L6 1v2.700h3V1l4 3.500L9 8V5.300H6V8z" /></svg>
        </button>
      </div>
      <div className="ml-2 flex h-5 shrink-0 items-center rounded-[5px] bg-[#363636] text-[#b5b5b5]">
        <div className="flex w-[74px] items-center pl-1.5">
          <svg width="9" height="12" viewBox="0 0 9 12" fill="none" stroke="currentColor" strokeWidth="1.200"><path d="M4.500 1v10M1.500 3.500l3-2.500 3 2.500M1.500 8.500l3 2.500 3-2.500" /></svg>
          <input type="range" aria-label="Vertical zoom" defaultValue={4} className="ml-1.5 h-1 w-[48px] appearance-none rounded-full bg-[#2a2a2a] [&::-webkit-slider-thumb]:size-3 [&::-webkit-slider-thumb]:appearance-none [&::-webkit-slider-thumb]:rounded-full [&::-webkit-slider-thumb]:bg-[#8c8c8c]" />
        </div>
        <div className="flex w-[76px] items-center border-l border-[#2a2a2a] pl-[5px]">
          <svg width="12" height="9" viewBox="0 0 12 9" fill="none" stroke="currentColor" strokeWidth="1.200"><path d="M1 4.500h10M3.500 1.500l-2.500 3 2.500 3M8.500 1.500l2.500 3-2.500 3" /></svg>
          <input type="range" aria-label="Horizontal zoom" defaultValue={4} className="ml-1.5 h-1 w-[48px] appearance-none rounded-full bg-[#2a2a2a] [&::-webkit-slider-thumb]:size-3 [&::-webkit-slider-thumb]:appearance-none [&::-webkit-slider-thumb]:rounded-full [&::-webkit-slider-thumb]:bg-[#8c8c8c]" />
        </div>
      </div>
    </div>
  );
}

function HeaderBar() {
  const b = "flex h-[21px] w-[33px] items-center justify-center rounded-[5px] bg-[#525252] text-[14px] font-medium text-[#e9e9e9] shadow-[0_1px_1px_#222]";
  return (
    <div className="flex h-[38px] shrink-0 items-center gap-2.5 border-b border-[#2b2b2b] bg-[#3e3e3e] px-2.5">
      <button type="button" aria-label="New track" className={b}><Icon size={15} sw={1.9}><path d="M12 4v16M4 12h16" /></Icon></button>
      <button type="button" aria-label="Duplicate track" className={b}><Icon size={17}><path d="M17 6V4.500A1.500 1.500 0 0015.500 3h-12A1.500 1.500 0 002 4.500v11A1.500 1.500 0 003.500 17H6" /><rect x="7" y="7" width="15" height="14" rx="1.500" /><path d="M14.500 10.500v7M11 14h7" strokeWidth="2" /></Icon></button>
      <button type="button" aria-label="Global solo" className={b}>S</button>
      <span className="flex-1" />
      <button type="button" aria-label="Track header options" className={b}><Icon size={16}><rect x="2" y="3" width="20" height="18" rx="2" /><path d="M2 7h20M12 10v7M9 14l3 3 3-3" strokeWidth="2" /></Icon></button>
    </div>
  );
}

function TrackHeader({ n, name }: { n: number; name: string }) {
  const muted = MUTED.has(n);
  const sel = n === SELECTED;
  const btn = "h-[13px] w-5 text-center leading-[14px]";
  return (
    <div className={`flex h-3.5 shrink-0 items-stretch border-b border-[#3a3a3a] text-[12px] leading-[14px] font-semibold text-[#f4f4f4] ${sel ? "bg-[#686868]" : "bg-[#4c4c4c]"}`}>
      <span className="w-7 border-r border-[#3f3f3f] text-center text-[13px]">{n}</span>
      <span className="flex w-[78px] items-center justify-center pl-4"><TrackIcon kind={kindOf(n)} /></span>
      <button type="button" aria-label={`Mute ${n}`} className={`${btn} ${muted ? "bg-[#1f6c8a]" : sel ? "bg-[#757575]" : "bg-[#5b5b5b]"}`}>M</button>
      <button type="button" aria-label={`Solo ${n}`} className={`${btn} ml-px ${sel ? "bg-[#757575]" : "bg-[#5b5b5b]"}`}>S</button>
      <button type="button" aria-label={`Record ${n}`} className={`${btn} ml-1.5 ${sel ? "bg-[#757575] text-[#b3141c]" : "bg-[#5b5b5b]"}`}>R</button>
      {n >= 38 ? <button type="button" aria-label={`Input ${n}`} className={`${btn} ml-px bg-[#5b5b5b]`}>I</button> : <span className="w-[21px]" />}
      <span className="ml-[9px] w-[100px] text-[13px] font-medium whitespace-nowrap">{name}</span>
      <span className="mt-0.5 size-[9px] rounded-full bg-[#323232]" />
    </div>
  );
}

function Region({ clip }: { clip: Clip }) {
  const [start, end, label, tone, loop = 0, stereo] = clip;
  const left = Math.floor(start * PX_PER_BAR);
  const width = Math.floor(end * PX_PER_BAR) - left + 1;
  const marks: number[] = [];
  if (loop) for (let b = loop; b < end - start - 0.1; b += loop) marks.push(Math.round(b * PX_PER_BAR) - 1);
  return (
    <div className={`absolute inset-y-0 flex items-center gap-1.5 overflow-hidden rounded-t-[2px] border-x border-t border-black text-[11px] leading-[13px] font-medium whitespace-nowrap ${TONES[tone]}`} style={{ left, width }}>
      {marks.map((m) => (
        <span key={m} className="absolute inset-y-0 w-px border-t border-b-2 border-black" style={{ left: m }} />
      ))}
      {label && <span className="relative pl-1">{label}</span>}
      {stereo && <StereoMark />}
    </div>
  );
}

function Timeline() {
  const rulerBars = Array.from({ length: 12 }, (_, i) => i * 16);
  return (
    <div className="relative flex min-w-0 flex-1 flex-col overflow-hidden border-l border-[#1d1d1d] bg-[#232323] pl-2">
      <div className="relative h-[38px] shrink-0 border-b border-[#1f1f1f] bg-[#2b2b2b]">
        <div className="h-5 w-[793px] border-b border-[#191919] bg-[#494949]" />
        <div className="h-[17px] border-t border-[#1f1f1f] bg-[linear-gradient(to_right,#626262_1px,transparent_1px)] bg-[length:15px_100%]" />
        {rulerBars.map((b) => (
          <span key={b} className="absolute top-[3px] bottom-0 border-l border-[#707070] pl-[3px] text-[13px] leading-[15px] font-medium text-[#c9c9c9]" style={{ left: b * PX_PER_BAR }}>{b + 1}</span>
        ))}
      </div>
      <div className="shrink-0 bg-[#292929] bg-[linear-gradient(to_right,#3c3c3c_1px,transparent_1px)] bg-[length:15px_100%]">
        {NAMES.map((_, i) => (
          <div key={i} className={`relative h-3.5 border-b border-[#202020] ${i + 1 === SELECTED ? "bg-white/3" : ""}`}>
            {(CLIPS[i + 1] ?? []).map((c, k) => <Region key={k} clip={c} />)}
          </div>
        ))}
      </div>
      <div className="absolute top-5 bottom-0 left-0 flex w-[17px] flex-col items-center">
        <svg width="17" height="17" viewBox="0 0 17 17" aria-hidden="true"><path d="M1 3a2 2 0 012-2h11a2 2 0 012 2v4.500L8.500 16 1 7.500z" fill="#a8a8a8" stroke="#555" strokeWidth="0.600" /></svg>
        <span className="w-px flex-1 bg-white" />
      </div>
    </div>
  );
}

export default function App() {
  return (
    <div className="h-screen overflow-hidden bg-white px-14 pt-[37px] pb-[74px] font-['Inter','Liberation_Sans',sans-serif]">
      <div className="flex h-full flex-col overflow-hidden rounded-[10px] bg-[#303030] shadow-[0_0_0_1px_#111,0_20px_36px_4px_rgba(0,0,0,0.6)]">
        <Toolbar />
        <div className="flex min-h-0 flex-1">
          <Inspector />
          <main className="flex min-w-0 flex-1 flex-col border-l-2 border-black">
            <MenuBar />
            <div className="flex min-h-0 flex-1 overflow-hidden">
              <div className="flex w-[325px] shrink-0 flex-col overflow-hidden">
                <HeaderBar />
                {NAMES.map((name, i) => <TrackHeader key={i} n={i + 1} name={name} />)}
              </div>
              <Timeline />
              <div className="flex w-[15px] shrink-0 flex-col items-center bg-[#303030] pt-[41px]">
                <div className="h-[375px] w-2 rounded-full bg-[#6b6b6b]" />
              </div>
            </div>
            <div className="flex h-4 shrink-0 items-center bg-[#303030] pl-[328px]">
              <div className="h-2 w-[581px] rounded-full bg-[#6b6b6b]" />
            </div>
          </main>
        </div>
      </div>
    </div>
  );
}
